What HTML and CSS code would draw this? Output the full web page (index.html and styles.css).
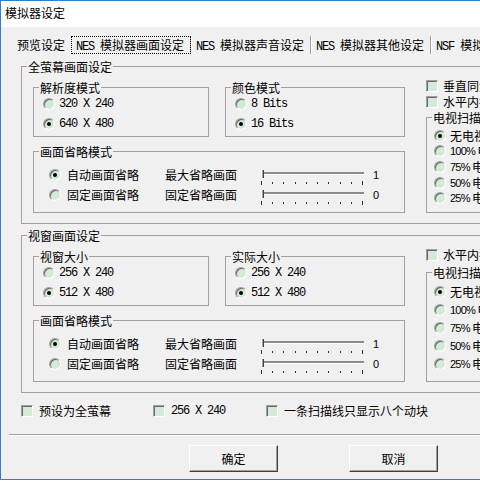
FILE: index.html
```html
<!DOCTYPE html>
<html lang="zh-CN">
<head>
<meta charset="utf-8">
<title>模拟器设定</title>
<link rel="stylesheet" href="styles.css">
</head>
<body>
<div class="window">
  <div class="titlebar">模拟器设定</div>
  <div class="client">
    <div class="tabs">
      <div class="tab first">预览设定</div>
      <div class="tab active"><span class="mono">NES </span>模拟器画面设定</div>
      <div class="tab"><span class="mono">NES </span>模拟器声音设定</div>
      <div class="tab"><span class="mono">NES </span>模拟器其他设定</div>
      <div class="tab"><span class="mono">NSF </span>模拟器设定</div>
    </div>

    <div class="page">
      <!-- full screen settings -->
      <fieldset class="group">
        <legend>全萤幕画面设定</legend>
        <div class="section">
          <div class="col-left">
            <div class="pair">
              <fieldset class="group res">
                <legend>解析度模式</legend>
                <div class="opts">
                  <div class="opt"><span class="rb"></span><span class="mono">320 X 240</span></div>
                  <div class="opt"><span class="rb on"></span><span class="mono">640 X 480</span></div>
                </div>
              </fieldset>
              <fieldset class="group color">
                <legend>颜色模式</legend>
                <div class="opts">
                  <div class="opt"><span class="rb"></span><span class="mono">8 Bits</span></div>
                  <div class="opt"><span class="rb on"></span><span class="mono">16 Bits</span></div>
                </div>
              </fieldset>
            </div>
            <fieldset class="group omit">
              <legend>画面省略模式</legend>
              <div class="omit-grid">
                <div class="opt"><span class="rb on"></span>自动画面省略</div>
                <div>最大省略画面</div>
                <div class="slider"><span class="thumb"></span><span class="track"></span><span class="ticks"><i></i><i></i><i></i><i></i><i></i><i></i><i></i><i></i><i></i><i></i></span></div>
                <div class="val">1</div>
                <div class="opt"><span class="rb"></span>固定画面省略</div>
                <div>固定省略画面</div>
                <div class="slider"><span class="thumb"></span><span class="track"></span><span class="ticks"><i></i><i></i><i></i><i></i><i></i><i></i><i></i><i></i><i></i><i></i></span></div>
                <div class="val">0</div>
              </div>
            </fieldset>
          </div>
          <div class="col-right">
            <div class="chk"><span class="cb"></span>垂直同步</div>
            <div class="chk"><span class="cb"></span>水平内插</div>
            <fieldset class="group tv">
              <legend>电视扫描线</legend>
              <div class="tv-opts">
                <div class="opt"><span class="rb on"></span>无电视扫描线</div>
                <div class="opt"><span class="rb"></span><span class="sans">100% </span>电视扫描线</div>
                <div class="opt"><span class="rb"></span><span class="sans">75% </span>电视扫描线</div>
                <div class="opt"><span class="rb"></span><span class="sans">50% </span>电视扫描线</div>
                <div class="opt"><span class="rb"></span><span class="sans">25% </span>电视扫描线</div>
              </div>
            </fieldset>
          </div>
        </div>
      </fieldset>

      <!-- windowed settings -->
      <fieldset class="group lower">
        <legend>视窗画面设定</legend>
        <div class="section">
          <div class="col-left">
            <div class="pair">
              <fieldset class="group res">
                <legend>视窗大小</legend>
                <div class="opts">
                  <div class="opt"><span class="rb"></span><span class="mono">256 X 240</span></div>
                  <div class="opt"><span class="rb on"></span><span class="mono">512 X 480</span></div>
                </div>
              </fieldset>
              <fieldset class="group color">
                <legend>实际大小</legend>
                <div class="opts">
                  <div class="opt"><span class="rb"></span><span class="mono">256 X 240</span></div>
                  <div class="opt"><span class="rb on"></span><span class="mono">512 X 480</span></div>
                </div>
              </fieldset>
            </div>
            <fieldset class="group omit">
              <legend>画面省略模式</legend>
              <div class="omit-grid">
                <div class="opt"><span class="rb on"></span>自动画面省略</div>
                <div>最大省略画面</div>
                <div class="slider"><span class="thumb"></span><span class="track"></span><span class="ticks"><i></i><i></i><i></i><i></i><i></i><i></i><i></i><i></i><i></i><i></i></span></div>
                <div class="val">1</div>
                <div class="opt"><span class="rb"></span>固定画面省略</div>
                <div>固定省略画面</div>
                <div class="slider"><span class="thumb"></span><span class="track"></span><span class="ticks"><i></i><i></i><i></i><i></i><i></i><i></i><i></i><i></i><i></i><i></i></span></div>
                <div class="val">0</div>
              </div>
            </fieldset>
          </div>
          <div class="col-right">
            <div class="chk"><span class="cb"></span>水平内插</div>
            <fieldset class="group tv">
              <legend>电视扫描线</legend>
              <div class="tv-opts">
                <div class="opt"><span class="rb on"></span>无电视扫描线</div>
                <div class="opt"><span class="rb"></span><span class="sans">100% </span>电视扫描线</div>
                <div class="opt"><span class="rb"></span><span class="sans">75% </span>电视扫描线</div>
                <div class="opt"><span class="rb"></span><span class="sans">50% </span>电视扫描线</div>
                <div class="opt"><span class="rb"></span><span class="sans">25% </span>电视扫描线</div>
              </div>
            </fieldset>
          </div>
        </div>
      </fieldset>

      <div class="checks">
        <div class="chk"><span class="cb"></span>预设为全萤幕</div>
        <div class="chk"><span class="cb"></span><span class="mono">256 X 240</span></div>
        <div class="chk"><span class="cb"></span>一条扫描线只显示八个动块</div>
      </div>
    </div>

    <div class="buttons">
      <div class="btn">确定</div>
      <div class="btn">取消</div>
    </div>
  </div>
</div>
</body>
</html>
```

FILE: styles.css
```css
* { box-sizing: border-box; }

html, body { margin: 0; padding: 0; }

body {
  width: 480px;
  height: 483px;
  overflow: hidden;
  background: #fff;
  color: #000;
  font-family: "Noto Sans CJK SC", sans-serif;
  font-size: 12px;
  line-height: 14px;
}

/* half-width Latin text keeps a 6px cell */
.mono {
  font-family: "Liberation Mono", "Noto Sans CJK SC", monospace;
  font-size: 12px;
  letter-spacing: -1.2px;
}

.sans {
  font-family: "Liberation Sans", sans-serif;
  font-size: 11px;
  letter-spacing: -0.8px;
  white-space: pre;
}

/* dialog frame */
.window {
  width: 560px;
  height: 480px;
  border: 1px solid #2b7fd4;
  background: #f0f0f0;
  display: flex;
  flex-direction: column;
}

.titlebar {
  flex: none;
  height: 26px;
  padding: 4px 0 0 4px;
  background: #fff;
  line-height: 15px;
}

.client {
  flex: 1;
  display: flex;
  flex-direction: column;
  padding: 9px 0 0 8px;
}

/* flat button-style tab strip */
.tabs {
  flex: none;
  display: flex;
  height: 18px;
  padding-left: 3px;
}

.tab {
  padding: 0 6px 0 5px;
  line-height: 18px;
  white-space: nowrap;
  border-right: 1px solid #a0a0a0;
  box-shadow: 1px 0 0 #fff;
}

.tab.first {
  padding-right: 5px;
  border-right-color: transparent;
  box-shadow: none;
}

.tab.active {
  outline: 1px dotted #000;
  outline-offset: -1px;
}

.page {
  flex: none;
  height: 381px;
  padding: 5px 10px 16px 12px;
  border-bottom: 1px solid #a0a0a0;
  box-shadow: 0 1px 0 #fff;
  display: flex;
  flex-direction: column;
}

/* group boxes */
.group {
  margin: 0;
  padding: 0;
  min-width: 0;
  border: 1px solid #a0a0a0;
}

.group > legend {
  margin-left: 5px;
  padding: 0 1px;
  height: 15px;
  line-height: 15px;
}

.group.lower { margin-top: 4px; }

.section {
  display: flex;
  padding: 6px 0 10px 11px;
}

.col-left {
  flex: none;
  width: 372px;
  display: flex;
  flex-direction: column;
  gap: 7px;
}

.pair {
  display: flex;
  gap: 16px;
}

.res { width: 176px; }
.color { width: 180px; }

.opts {
  display: flex;
  flex-direction: column;
  gap: 2px;
  padding: 0 0 3px 9px;
}

.opt {
  display: flex;
  align-items: center;
  height: 18px;
  white-space: nowrap;
}

/* radio button */
.rb {
  flex: none;
  position: relative;
  width: 12px;
  height: 12px;
  margin-right: 4px;
  border-radius: 50%;
  border: 1px solid;
  border-color: #a0a0a0 #fff #fff #a0a0a0;
  box-shadow: inset 1px 1px 0 #696969;
  background: #d3ead6;
}

.rb.on::after {
  content: "";
  position: absolute;
  left: 3px;
  top: 3px;
  width: 4px;
  height: 4px;
  border-radius: 50%;
  background: #000;
}

/* check box */
.chk {
  display: flex;
  align-items: center;
  height: 12px;
  white-space: nowrap;
}

.cb {
  flex: none;
  width: 12px;
  height: 12px;
  margin-right: 5px;
  border: 1px solid;
  border-color: #a0a0a0 #fff #fff #a0a0a0;
  box-shadow: inset 1px 1px 0 #696969;
  background: #d3ead6;
}

/* frame-skip rows with trackbars */
.omit-grid {
  display: grid;
  grid-template-columns: 116px 96px 103px auto;
  grid-auto-rows: 20px;
  align-items: center;
  padding: 6px 0 7px 15px;
}

.omit-grid .opt { height: 20px; }
.omit .rb { margin-right: 6px; }

.slider {
  align-self: stretch;
  position: relative;
  padding-top: 7px;
}

.track {
  display: block;
  height: 2px;
  background: #8c8c8c;
  box-shadow: 0 1px 0 #fff;
}

.ticks {
  display: flex;
  justify-content: space-between;
  align-items: center;
  width: 102px;
  height: 4px;
  margin-top: 7px;
}

.ticks i {
  width: 1px;
  height: 2px;
  background: #333;
}

.ticks i:first-child,
.ticks i:last-child { height: 4px; }

.thumb {
  position: absolute;
  left: 0;
  top: 5px;
  width: 3px;
  height: 8px;
  border-left: 1px solid #fff;
  border-right: 1px solid #404040;
  background: #a0a0a0;
}

.val {
  padding-left: 9px;
  font-family: "Liberation Sans", sans-serif;
  font-size: 11px;
}

/* right-hand column */
.col-right {
  flex: 1;
  min-width: 0;
  margin-left: 21px;
  padding-right: 10px;
  display: flex;
  flex-direction: column;
}

.col-right .chk + .chk { margin-top: 4px; }

.tv {
  flex: 1;
  margin-top: 2px;
}

.lower .tv { margin-top: 4px; }

.tv-opts {
  display: grid;
  grid-auto-rows: 15.6px;
  align-items: center;
  padding: 3px 0 0 7px;
}

.tv-opts .opt { height: 15.6px; }

.lower .tv-opts { grid-auto-rows: 18px; }
.lower .tv-opts .opt { height: 18px; }

/* bottom option row */
.checks {
  display: flex;
  margin-top: 11px;
  height: 14px;
}

.checks .chk { height: 14px; }
.checks .cb { margin-right: 6px; }
.checks .chk:nth-child(1) { width: 132px; }
.checks .chk:nth-child(2) { width: 113px; }

/* dialog buttons */
.buttons {
  display: flex;
  gap: 71px;
  padding-left: 180px;
  margin-top: 10px;
}

.btn {
  width: 89px;
  height: 27px;
  display: flex;
  align-items: center;
  justify-content: center;
  border: 1px solid;
  border-color: #fff #404040 #404040 #fff;
  box-shadow: inset -1px -1px 0 #a0a0a0;
  background: #f0f0f0;
}
```
